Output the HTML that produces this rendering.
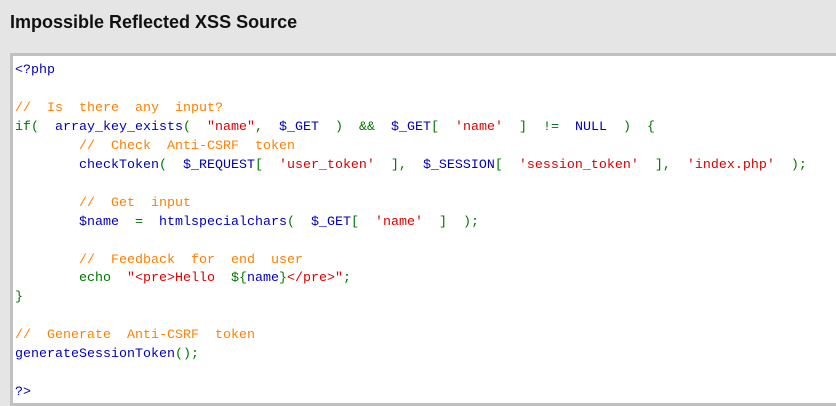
<!DOCTYPE html>
<html><head><meta charset="utf-8"><style>
html,body{margin:0;padding:0;width:836px;height:405px;overflow:hidden;background:#e5e5e5;}
h1{position:absolute;left:10px;top:12px;margin:0;font:bold 18px "Liberation Sans",Arial,sans-serif;color:#111;}
.box{position:absolute;left:10px;top:53px;width:840px;height:347px;background:#fff;border:3px solid #c0c0c0;}
pre{position:absolute;left:2px;top:6px;margin:0;font:13.33px/18.95px "Liberation Mono","Noto Sans CJK SC",monospace;color:#0000bb;white-space:pre;}
.o{color:#ff8000}.g{color:#007700}.r{color:#dd0000}.b{color:#0000bb}
</style></head><body>
<h1>Impossible Reflected XSS Source</h1>
<div class="box"><pre>&lt;?php

<span class="o">//  Is  there  any  input?</span>
<span class="g">if(  </span>array_key_exists<span class="g">(  </span><span class="r">"name"</span><span class="g">,  </span>$_GET<span class="g">  )  &amp;&amp;  </span>$_GET<span class="g">[  </span><span class="r">'name'</span><span class="g">  ]  !=  </span>NULL<span class="g">  )  {</span>
<span class="o">        //  Check  Anti-CSRF  token</span>
        checkToken<span class="g">(  </span>$_REQUEST<span class="g">[  </span><span class="r">'user_token'</span><span class="g">  ],  </span>$_SESSION<span class="g">[  </span><span class="r">'session_token'</span><span class="g">  ],  </span><span class="r">'index.php'</span><span class="g">  );</span>

<span class="o">        //  Get  input</span>
        $name<span class="g">  =  </span>htmlspecialchars<span class="g">(  </span>$_GET<span class="g">[  </span><span class="r">'name'</span><span class="g">  ]  );</span>

<span class="o">        //  Feedback  for  end  user</span>
<span class="g">        echo  </span><span class="r">"&lt;pre&gt;Hello  </span><span class="g">${</span>name<span class="g">}</span><span class="r">&lt;/pre&gt;"</span><span class="g">;</span>
<span class="g">}</span>

<span class="o">//  Generate  Anti-CSRF  token</span>
generateSessionToken<span class="g">();</span>

?&gt;</pre></div>
</body></html>
